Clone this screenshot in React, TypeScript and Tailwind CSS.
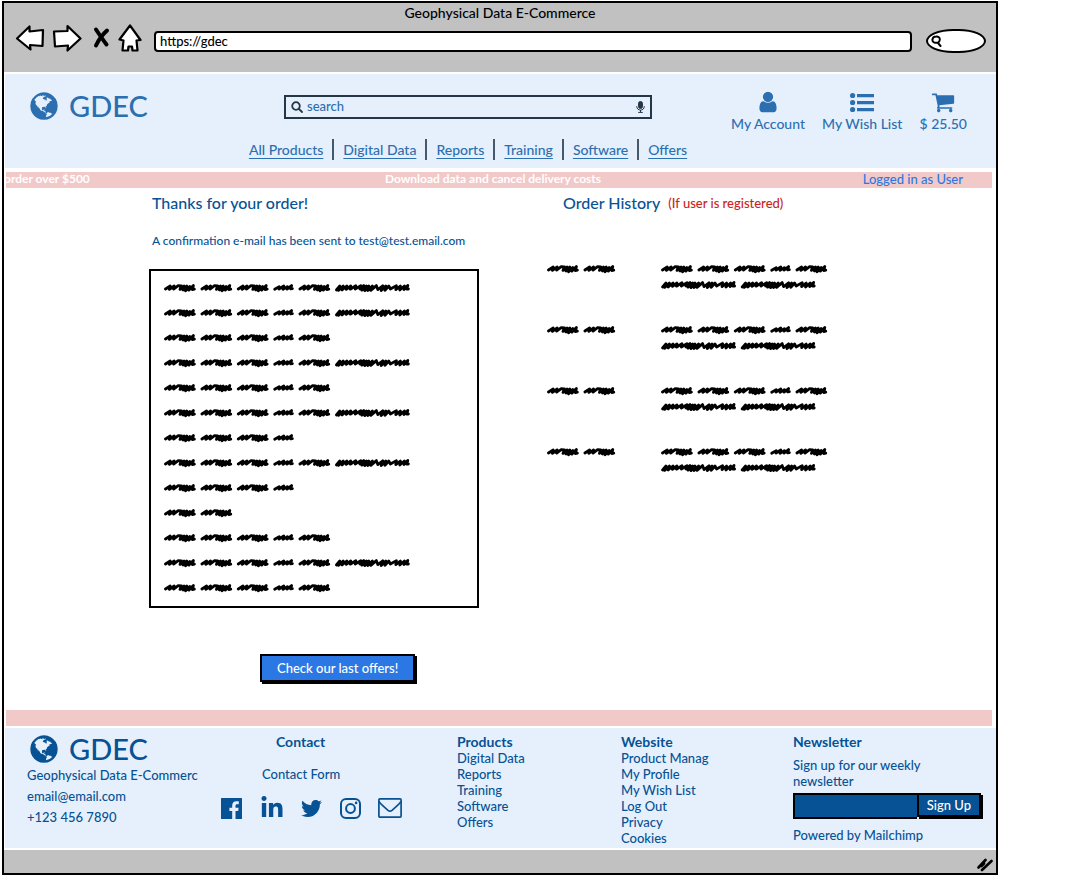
import React from "react";
import { FaTwitter, FaLinkedinIn } from "react-icons/fa";

const GLOBE =
  "M896 128q209 0 385.5 103t279.5 279.5 103 385.5-103 385.5-279.5 279.5-385.5 103-385.5-103-279.5-279.5-103-385.5 103-385.5 279.5-279.5 385.5-103zm274 521q-2 1-9.5 9.5t-13.5 9.5q2 0 4.5-5t5-11 3.5-7q6-7 22-15 14-6 52-12 34-8 51 11-2-2 9.5-13t14.5-12q3-2 15-4.5t15-7.5l2-22q-12 1-17.5-7t-6.5-21q0 2-6 8 0-7-4.5-8t-11.5 1-9 1q-10-3-15-7.5t-8-16.5-4-15q-2-5-9.5-11t-9.5-10q-1-2-2.5-5.5t-3-6.5-4-5.5-5.5-2.5-7 5-7.5 10-4.5 5q-3-2-6-1.5t-4.5 1-4.5 3-5 3.5q-3 2-8.5 3t-8.5 2q15-5-1-11-10-4-16-3 9-4 7.5-12t-8.5-14h5q-1-4-8.5-8.5t-17.5-8.5-13-6q-8-5-34-9.5t-33-.5q-5 6-4.5 10.5t4 14 3.5 12.5q1 6-5.5 13t-6.5 12q0 7 14 15.5t10 21.5q-3 8-16 16t-16 12q-5 8-1.5 18.5t10.5 16.5q2 2 1.5 4t-3.5 4.5-5.5 4-6.5 3.5l-3 2q-11 5-20.5-6t-13.5-26q-7-25-16-30-23-8-29 1-5-13-41-26-25-9-58-4 6-1 0-15-7-15-19-12 3-6 4-17.5t1-13.5q3-13 12-23 1-1 7-8.5t9.5-13.5.5-6q35 4 50-11 5-5 11.5-17t10.5-17q9-6 14-5.5t14.5 5.5 14.5 5q14 1 15.5-11t-7.5-20q12 1 3-17-4-7-8-9-12-4-27 5-8 4 2 8-1-1-9.5 10.5t-16.5 17.5-16-5q-1-1-5.5-13.5t-9.5-13.5q-8 0-16 15 3-8-11-15t-24-8q19-12-8-27-7-4-20.5-5t-19.5 4q-5 7-5.5 11.5t5 8 10.5 5.5 11.5 4 8.5 3q14 10 8 14-2 1-8.5 3.5t-11.5 4.5-6 4q-3 4 0 14t-2 14q-5-5-9-17.5t-7-16.5q7 9-25 6l-10-1q-4 0-16 2t-20.5 1-13.5-8q-4-8 0-20 1-4 4-2-4-3-11-9.5t-10-8.5q-46 15-94 41 6 1 12-1 5-2 13-6.5t10-5.5q34-14 42-7l5-5q14 16 20 25-7-4-30-1-20 6-22 12 7 12 5 18-4-3-11.5-10t-14.5-11-15-5q-16 0-22 1-146 80-235 222 7 7 12 8 4 1 5 9t2.5 11 11.5-3q9 8 3 19 1-1 44 27 19 17 21 21 3 11-10 18-1-2-9-9t-9-4q-3 5 .5 18.5t10.5 12.5q-7 0-9.5 16t-2.5 35.5-1 23.5l2 1q-3 12 5.5 34.5t21.5 19.5q-13 3 20 43 6 8 8 9 3 2 12 7.5t15 10 10 10.5q4 5 10 22.5t14 23.5q-2 6 9.5 20t10.5 23q-1 0-2.5 1t-2.5 1q3 7 15.5 14t15.5 13q1 3 2 10t3 11 8 2q2-20-24-62-15-25-17-29-3-5-5.5-15.5t-4.5-14.5q2 0 6 1.5t8.5 3.5 7.5 4 2 3q-3 7 2 17.5t12 18.5 17 19 12 13q6 6 14 19.5t0 13.5q9 0 20 10t17 20q5 8 8 26t5 24q2 7 8.5 13.5t12.5 9.5l16 8 13 7q5 2 18.5 10.5t21.5 11.5q10 4 16 4t14.5-2.5 13.5-3.5q15-2 29 15t21 21q36 19 55 11-2 1 .5 7.5t8 15.5 9 14.5 5.5 8.5q5 6 18 15t18 15q6-4 7-9-3 8 7 20t18 10q14-3 14-32-31 15-49-18 0-1-2.5-5.5t-4-8.5-2.5-8.5 0-7.5 5-3q9 0 10-3.5t-2-12.5-4-13q-1-8-11-20t-12-15q-5 9-16 8t-16-9q0 1-1.5 5.5t-1.5 6.5q-13 0-15-1 1-3 2.5-17.5t3.5-22.5q1-4 5.5-12t7.5-14.5 4-12.5-4.5-9.5-17.5-2.5q-19 1-26 20-1 3-3 10.5t-5 11.5-9 7q-7 3-24 2t-24-5q-13-8-22.5-29t-9.5-37q0-10 2.5-26.5t3-25-5.5-24.5q3-2 9-9.5t10-10.5q2-1 4.5-1.5t4.5 0 4-1.5 3-6q-1-1-4-3-3-3-4-3 7 3 28.5-1.5t27.5 1.5q15 11 22-2 0-1-2.5-9.5t-.5-13.5q5 27 29 9 3 3 15.5 5t17.5 5q3 2 7 5.5t5.5 4.5 5-.5 8.5-6.5q10 14 12 24 11 40 19 44 7 3 11 2t4.5-9.5 0-14-1.5-12.5l-1-8v-18l-1-8q-15-3-18.5-12t1.5-18.5 15-18.5q1-1 8-3.5t15.5-6.5 12.5-8q21-19 15-35 7 0 11-9-1 0-5-3t-7.5-5-4.5-2q9-5 2-16 5-3 7.5-11t7.5-10q9 12 21 2 7-8 1-16 5-7 20.5-10.5t18.5-9.5q7 2 8-2t1-12 3-12q4-5 15-9t13-5l17-11q3-4 0-4 18 2 31-11 10-11-6-20 3-6-3-9.5t-15-5.5q3-1 11.5-.5t10.5-1.5q15-10-7-16-17-5-43 12zm-163 877q206-36 351-189-3-3-12.5-4.5t-12.5-3.5q-18-7-24-8 1-7-2.5-13t-8-9-12.5-8-11-7q-2-2-7-6t-7-5.5-7.5-4.5-8.5-2-10 1l-3 1q-3 1-5.5 2.5t-5.5 3-4 3 0 2.5q-21-17-36-22-5-1-11-5.5t-10.5-7-10-1.5-11.5 7q-5 5-6 15t-2 13q-7-5 0-17.5t2-18.5q-3-6-10.5-4.5t-12 4.5-11.5 8.5-9 6.5-8.5 5.5-8.5 7.5q-3 4-6 12t-5 11q-2-4-11.5-6.5t-9.5-5.5q2 10 4 35t5 38q7 31-12 48-27 25-29 40-4 22 12 26 0 7-8 20.5t-7 21.5q0 6 2 16z";
const USER =
  "M1536 1399q0 109-62.5 187t-150.5 78h-854q-88 0-150.5-78t-62.5-187q0-85 8.5-160.5t31.5-152 58.5-131 94-89 134.5-34.5q131 128 313 128t313-128q76 0 134.5 34.5t94 89 58.5 131 31.5 152 8.5 160.5zm-256-887q0 159-112.5 271.5t-271.5 112.5-271.5-112.5-112.5-271.5 112.5-271.5 271.5-112.5 271.5 112.5 112.5 271.5z";
const CART =
  "M704 1536q0 52-38 90t-90 38-90-38-38-90 38-90 90-38 90 38 38 90zm896 0q0 52-38 90t-90 38-90-38-38-90 38-90 90-38 90 38 38 90zm128-1088v512q0 24-16.5 42.5t-40.5 21.5l-1044 122q13 60 13 70 0 16-24 64h920q26 0 45 19t19 45-19 45-45 19h-1024q-26 0-45-19t-19-45q0-11 8-31.5t16-36 21.5-40 15.5-29.5l-177-823h-204q-26 0-45-19t-19-45 19-45 45-19h256q16 0 28.5 6.5t19.5 15.5 13 24.5 8 26 5.5 29.5 4.5 26h1201q26 0 45 19t19 45z";

function Glyph({ d, className }: { d: string; className: string }) {
  return (
    <svg viewBox="0 0 1792 1792" fill="currentColor" className={className} aria-hidden="true">
      <path d={d} />
    </svg>
  );
}

function Logo() {
  return (
    <a href="#home" className="flex items-center gap-[9px]">
      <Glyph d={GLOBE} className="h-8 w-8" />
      <span className="text-[29px] leading-8">GDEC</span>
    </a>
  );
}

/* Hand-drawn filler words: m = medium, s = short, l = long */
const WORDS: Record<string, { w: number; d: string }> = {
  m: {
    w: 31.8,
    d: "M1.5 7 6.2 4 5.4 7.4 10.2 4 9.6 7.2 14.2 3.6 17.4 3.8 16 7.4 20 4 19 8 22.8 4 21.6 8.8 25.8 4.4 24.8 8.2 29.4 3.4 28.4 7.6 30.4 7.2",
  },
  s: { w: 20.6, d: "M1.5 7.2 6 4.6 5.8 7 10.6 4 9.8 7.4 14.2 4.6 13.8 7.2 18.4 3.6 17.4 6.8 19.2 6.6" },
  l: {
    w: 75,
    d: "M1.6 8 5 4 3.6 8.400 8.400 4 7.2 8 12 4 11.400 7.400 16 4 15.400 7.2 21 3.800 20.4 7 26 3.600 25 7 29 3.600 27 8.200 31.6 4 30 8.600 34 4 33 8.600 37.6 4 36 8.400 41.6 3.600 43 7.600 48 3.800 46.4 8.600 51 4 50.2 8.400 54 4 55.6 7 61.6 3.600 61 7.600 65.6 4 65 8 69.6 4 69.2 7.600 73 3.400 72 7.2 73.6 7",
  },
};

function Scribble({ words }: { words: string }) {
  let x = 0;
  return (
    <svg width="250" height="12" viewBox="0 0 250 12" fill="none" stroke="#000" strokeWidth="2.8" strokeLinecap="round" strokeLinejoin="round" className="shrink-0" aria-hidden="true">
      {words.split("").map((k, i) => {
        const at = x;
        x += WORDS[k].w + 4.6;
        return <path key={i} d={WORDS[k].d} transform={`translate(${at} 0)`} />;
      })}
    </svg>
  );
}

const NAV = ["All Products", "Digital Data", "Reports", "Training", "Software", "Offers"];
const SUMMARY = ["mmmsml", "mmmsml", "mmmsm", "mmmsml", "mmmsm", "mmmsml", "mmms", "mmmsml", "mmms", "mm", "mmmsm", "mmmsml", "mmmsm"];
const PRODUCTS = ["Digital Data", "Reports", "Training", "Software", "Offers"];
const WEBSITE = ["Product Manag", "My Profile", "My Wish List", "Log Out", "Privacy", "Cookies"];

function BrowserBar() {
  return (
    <div className="h-[69px] bg-[#c1c1c1] text-black">
      <p className="text-center text-[14px] leading-5">Geophysical Data E-Commerce</p>
      <div className="flex items-center pr-[10px] pl-[11px]">
        <button aria-label="Back">
          <svg width="30" height="28" viewBox="0 0 30 28" fill="#fff" stroke="#000" strokeWidth="2.2" strokeLinejoin="round">
            <path d="M2 14.500 14.500 2.500 14.500 7.500 28 6 27.500 22 15 21 15.500 25.500z" />
          </svg>
        </button>
        <button aria-label="Forward" className="ml-[7px]">
          <svg width="30" height="28" viewBox="0 0 30 28" fill="#fff" stroke="#000" strokeWidth="2.2" strokeLinejoin="round">
            <path d="M2 7.500 15.500 7 15.500 2 28.500 14.500 15.500 26.500 16 21.500 3 22.500z" />
          </svg>
        </button>
        <button aria-label="Stop" className="ml-[10px]">
          <svg width="18" height="24" viewBox="0 0 18 24" fill="none" stroke="#000" strokeWidth="4" strokeLinecap="round">
            <path d="M4 3.500C7 8 11 14 14.500 18.500M15 4.500C10 9 7 13 4 19.500" />
          </svg>
        </button>
        <button aria-label="Home" className="ml-2">
          <svg width="24" height="28" viewBox="0 0 24 28" fill="#fff" stroke="#000" strokeWidth="2.200" strokeLinejoin="round">
            <path d="M12 1.500 22.500 16 18.500 16.500 19.500 26.500 14.500 26.500 14 22.500 10.500 22.500 10 26.500 4.500 26.500 5.500 16.500 1.500 15.500z" />
          </svg>
        </button>
        <input aria-label="Address" defaultValue="https://gdec" className="mt-[6px] ml-[12px] h-[21px] min-w-0 flex-1 rounded-[4px] border-2 border-black bg-white px-1 text-[13px] outline-none" />
        <label className="mt-[6px] ml-[14px] flex h-6 w-[60px] items-center rounded-[45%/50%] border-2 border-black bg-white pl-[3px]">
          <svg width="11" height="12" viewBox="0 0 11 12" fill="none" stroke="#000" strokeWidth="2" strokeLinecap="round" aria-hidden="true">
            <path d="M5 1.500c2.400-.2 4 1 3.800 3C8.600 7 7 8 5 7.800 2.500 7.800 1.200 6.500 1.500 4.500 1.700 2.500 3 1.600 5 1.500zM7 8l2.500 3" />
          </svg>
          <input aria-label="Web search" className="w-8 min-w-0 bg-transparent text-xs outline-none" />
        </label>
      </div>
    </div>
  );
}

function Header() {
  return (
    <header className="mt-[2px] ml-px flex h-[94px] bg-[#e6f0fd] text-[#2c6fb0]">
      <div className="w-[200px] shrink-0 pt-4 pl-[23px]">
        <Logo />
      </div>
      <div className="flex flex-1 flex-col items-center pt-[21px]">
        <label className="flex h-6 w-[368px] items-center gap-1 border-2 border-[#253746] px-[5px] text-[#253746]">
          <svg width="12" height="12" viewBox="0 0 12 12" fill="none" stroke="currentColor" strokeWidth="1.800" strokeLinecap="round" aria-hidden="true">
            <circle cx="5" cy="5" r="3.800" />
            <path d="m8 8 3 3" />
          </svg>
          <input aria-label="Search products" placeholder="search" className="min-w-0 flex-1 bg-transparent text-[13px] placeholder-[#2c6fb0] outline-none" />
          <svg width="9" height="12" viewBox="0 0 9 12" fill="none" stroke="currentColor" aria-hidden="true">
            <rect x="2.500" y=".5" width="4" height="7" rx="2" fill="currentColor" />
            <path d="M.7 5.200c0 5.200 7.600 5.200 7.600 0M4.500 9v2.200M2.200 11.400h4.600" />
          </svg>
        </label>
        <nav className="mt-5 flex items-center text-[14px] leading-5">
          {NAV.map((n, i) => (
            <React.Fragment key={n}>
              {i > 0 && <span className="mx-[9px] h-[21px] w-[2px] bg-[#46586c]" />}
              <a href="#shop" className="whitespace-nowrap underline underline-offset-3">
                {n}
              </a>
            </React.Fragment>
          ))}
        </nav>
      </div>
      <div className="flex w-[265px] shrink-0 justify-between pt-4 pr-[29px] text-[14px] leading-5">
        <a href="#account" className="flex flex-col items-center whitespace-nowrap">
          <Glyph d={USER} className="h-6 w-6" />
          My Account
        </a>
        <a href="#wishlist" className="flex flex-col items-center whitespace-nowrap">
          <svg width="24" height="24" viewBox="0 0 24 24" fill="currentColor" aria-hidden="true">
            <circle cx="2.600" cy="5.500" r="2.600" />
            <circle cx="2.600" cy="12.500" r="2.600" />
            <circle cx="2.600" cy="19.500" r="2.600" />
            <path d="M7 4h17v3.200H7zM7 11h17v3.200H7zM7 18h17v3.200H7z" />
          </svg>
          My Wish List
        </a>
        <a href="#cart" className="flex flex-col items-center whitespace-nowrap">
          <Glyph d={CART} className="h-6 w-6" />$ 25.50
        </a>
      </div>
    </header>
  );
}

function Social() {
  return (
    <div className="mt-[14px] flex items-center justify-between">
      <a href="#facebook" aria-label="Facebook">
        <svg width="21" height="21" viewBox="0 0 21 21" fill="currentColor">
          <path d="M.6 0h19.800a.6.6 0 0 1 .6.6v19.800a.6.6 0 0 1-.6.6h-5.900v-8.100h2.700l.4-3.200h-3.100V7.700c0-.9.300-1.500 1.600-1.500h1.700V3.300c-.3 0-1.300-.1-2.500-.1-2.400 0-4.100 1.500-4.100 4.200v2.300H8.400v3.200h2.800V21H.6a.6.6 0 0 1-.6-.6V.6A.6.6 0 0 1 .6 0z" />
        </svg>
      </a>
      <a href="#linkedin" aria-label="LinkedIn">
        <FaLinkedinIn size={24} />
      </a>
      <a href="#twitter" aria-label="Twitter">
        <FaTwitter size={21} />
      </a>
      <a href="#instagram" aria-label="Instagram">
        <svg width="21" height="21" viewBox="0 0 21 21" fill="none" stroke="currentColor" strokeWidth="2">
          <rect x="1" y="1" width="19" height="19" rx="5" />
          <circle cx="10.500" cy="10.500" r="4.400" />
          <circle cx="16.100" cy="4.900" r="1.300" fill="currentColor" stroke="none" />
        </svg>
      </a>
      <a href="#mail" aria-label="E-mail">
        <svg width="24" height="20" viewBox="0 0 24 20" fill="none" stroke="currentColor" strokeWidth="1.700" strokeLinejoin="round">
          <rect x=".9" y=".9" width="22.200" height="18.200" rx="1" />
          <path d="M1 3.500c2 3.200 6 6 9 8.800 1.400 1.100 2.600 1.100 4 0 3-2.800 7-5.600 9-8.800" />
        </svg>
      </a>
    </div>
  );
}

function LinkColumn({ title, items }: { title: string; items: string[] }) {
  return (
    <div>
      <h2 className="text-[14px] leading-4 font-bold">{title}</h2>
      <ul>
        {items.map((t) => (
          <li key={t} className="whitespace-nowrap">
            <a href="#link">{t}</a>
          </li>
        ))}
      </ul>
    </div>
  );
}

function Footer() {
  return (
    <footer className="mt-[2px] ml-px grid h-[120px] grid-cols-[194fr_236fr_164fr_172fr_190fr] pt-[6px] pr-[13px] pl-[22px] bg-[#e6f0fd] text-[13px] leading-4 text-[#075294]">
      <div>
        <div className="-mt-px pl-px">
          <Logo />
        </div>
        <p className="leading-[21px] whitespace-nowrap">Geophysical Data E-Commerc</p>
        <p className="leading-[21px]">email@email.com</p>
        <p className="leading-[21px]">+123 456 7890</p>
      </div>
      <div className="pr-[55px]">
        <h2 className="pl-[55px] text-[14px] leading-4 font-bold">Contact</h2>
        <p className="mt-4 pl-[41px]">
          <a href="#contact">Contact Form</a>
        </p>
        <Social />
      </div>
      <LinkColumn title="Products" items={PRODUCTS} />
      <LinkColumn title="Website" items={WEBSITE} />
      <div className="min-w-0">
        <h2 className="text-[14px] leading-4 font-bold">Newsletter</h2>
        <p className="mt-[7px] pr-10">Sign up for our weekly newsletter</p>
        <form className="mt-1 flex h-[26px] pr-[2px]" onSubmit={(e) => e.preventDefault()}>
          <input aria-label="E-mail address" className="w-0 min-w-0 flex-1 border-2 border-r-0 border-black bg-[#075294] px-1 text-white outline-none" />
          <button className="h-6 border-2 border-black bg-[#075294] px-2 whitespace-nowrap text-white shadow-[2px_2px_0_#000]">Sign Up</button>
        </form>
        <p className="mt-2">Powered by Mailchimp</p>
      </div>
    </footer>
  );
}

export default function App() {
  return (
    <div className="min-h-screen bg-white pt-px pr-[70px] pl-[2px] font-['Lato',sans-serif] font-medium">
      <div className="border-2 border-black bg-white">
        <BrowserBar />
        <Header />
        <div className="mt-1 mr-[4px] ml-[2px] grid h-4 grid-cols-[1fr_auto_1fr] bg-[#f2c9c9] text-[12px] leading-[14px] text-white">
          <p className="-ml-[2px] font-bold">order over $500</p>
          <p className="pr-3 font-bold">Download data and cancel delivery costs</p>
          <p className="pr-[29px] text-right text-[13px] text-[#2b78e4]">Logged in as User</p>
        </div>
        <main className="flex min-h-[522px] pt-[5px] pl-[145px] text-[#075294]">
          <section className="w-[330px] shrink-0">
            <h1 className="pl-[3px] text-[16px] leading-5">Thanks for your order!</h1>
            <p className="mt-5 pl-[3px] text-[12px] leading-4 whitespace-nowrap">A confirmation e-mail has been sent to test@test.email.com</p>
            <ul className="mt-5 border-2 border-black pt-1 pb-[6px] pl-[13px]">
              {SUMMARY.map((w, i) => (
                <li key={i} className="flex h-[25px] items-center">
                  <Scribble words={w} />
                </li>
              ))}
            </ul>
            <button className="mt-[46px] ml-[111px] h-7 border-2 border-black bg-[#2b78e4] px-[15px] text-[13px] leading-5 whitespace-nowrap text-white shadow-[2px_2px_0_#000]">
              Check our last offers!
            </button>
          </section>
          <section className="ml-[68px]">
            <div className="flex items-center gap-2 pl-4">
              <h2 className="text-[16px] leading-5">Order History</h2>
              <p className="text-[13px] leading-5 text-[#cc2222]">(If user is registered)</p>
            </div>
            <ul className="mt-12 flex flex-col gap-[29px]">
              {[0, 1, 2, 3].map((i) => (
                <li key={i} className="flex">
                  <div className="flex h-4 w-[114px] items-center overflow-hidden">
                    <Scribble words="mm" />
                  </div>
                  <div>
                    <div className="flex h-4 items-center">
                      <Scribble words="mmmsm" />
                    </div>
                    <div className="flex h-4 items-center">
                      <Scribble words="ll" />
                    </div>
                  </div>
                </li>
              ))}
            </ul>
          </section>
        </main>
        <div className="mr-[4px] ml-[2px] h-4 bg-[#f2c9c9]" />
        <Footer />
        <div className="mt-[2px] flex h-[23px] items-center justify-end bg-[#c1c1c1] pt-[6px] pr-[3px]">
          <svg width="16" height="14" viewBox="0 0 16 14" fill="none" stroke="#000" strokeWidth="2.600" strokeLinecap="round" aria-hidden="true">
            <path d="M1.500 9.500 8.500 2M5 12 14.500 3M4.500 8 7 5.500" />
          </svg>
        </div>
      </div>
    </div>
  );
}
